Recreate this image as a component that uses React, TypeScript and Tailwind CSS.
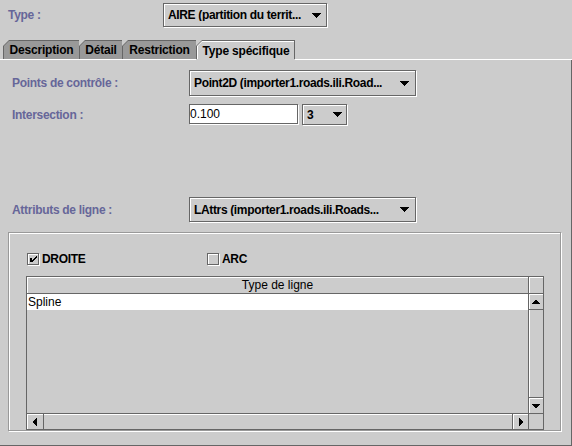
import React from "react";

function Arrow({ dir }: { dir: "down" | "up" | "left" | "right" | "combo" }) {
  if (dir === "combo")
    return (
      <svg width="9" height="5" viewBox="0 0 9 5" shapeRendering="crispEdges">
        <path d="M0 0h9v1H0zM1 1h7v1H1zM2 2h5v1H2zM3 3h3v1H3zM4 4h1v1H4z" fill="#000" />
      </svg>
    );
  if (dir === "up")
    return (
      <svg width="8" height="4" viewBox="0 0 8 4" shapeRendering="crispEdges">
        <path d="M3 0h2v1H3zM2 1h4v1H2zM1 2h6v1H1zM0 3h8v1H0z" fill="#000" />
      </svg>
    );
  if (dir === "down")
    return (
      <svg width="8" height="4" viewBox="0 0 8 4" shapeRendering="crispEdges">
        <path d="M0 0h8v1H0zM1 1h6v1H1zM2 2h4v1H2zM3 3h2v1H3z" fill="#000" />
      </svg>
    );
  if (dir === "left")
    return (
      <svg width="4" height="8" viewBox="0 0 4 8" shapeRendering="crispEdges">
        <path d="M0 3h1v2H0zM1 2h1v4H1zM2 1h1v6H2zM3 0h1v8H3z" fill="#000" />
      </svg>
    );
  return (
    <svg width="4" height="8" viewBox="0 0 4 8" shapeRendering="crispEdges">
      <path d="M0 0h1v8H0zM1 1h1v6H1zM2 2h1v4H2zM3 3h1v2H3z" fill="#000" />
    </svg>
  );
}

function Combo({ cls, arrowCls, text }: { cls: string; arrowCls: string; text: string }) {
  return (
    <div
      className={`flex items-center border border-[#666666] bg-[#cccccc] shadow-[inset_1px_1px_0_#ffffff,1px_1px_0_#ffffff] ${cls}`}
    >
      <div className="flex-1 pl-[4px] font-bold tracking-[-0.35px] whitespace-nowrap overflow-hidden">{text}</div>
      <div className={`h-full flex items-center justify-center ${arrowCls}`}>
        <Arrow dir="combo" />
      </div>
    </div>
  );
}

function Tab({ cls, label, selected, last }: { cls: string; label: string; selected?: boolean; last?: boolean }) {
  return (
    <div className={`flex flex-col ${cls}`}>
      <div
        className={`h-[19px] bg-[#666666] pt-px pl-px [clip-path:polygon(0_6px,6px_0,100%_0,100%_100%,0_100%)] ${
          last ? "pr-px" : ""
        }`}
      >
        {selected ? (
          <div className="h-full bg-white pt-px pl-px [clip-path:polygon(0_5px,5px_0,100%_0,100%_100%,0_100%)]">
            <div className="h-full bg-[#cccccc] flex items-center justify-center font-bold tracking-[-0.2px] [clip-path:polygon(0_4px,4px_0,100%_0,100%_100%,0_100%)]">
              {label}
            </div>
          </div>
        ) : (
          <div className="h-full bg-[#999999] flex items-center justify-center font-bold tracking-[-0.2px] [clip-path:polygon(0_5px,5px_0,100%_0,100%_100%,0_100%)]">
            {label}
          </div>
        )}
      </div>
      <div className={`h-px ${selected ? "bg-[#cccccc]" : "bg-white"}`} />
    </div>
  );
}

function Label({ children }: { children: React.ReactNode }) {
  return (
    <div className="w-[189px] pl-[12px] font-bold tracking-[-0.3px] text-[#666699] whitespace-nowrap">{children}</div>
  );
}

function Check({ checked }: { checked?: boolean }) {
  return (
    <div className="relative w-[12px] h-[12px] border border-[#666666] bg-[#cccccc] shadow-[inset_1px_1px_0_#ffffff,1px_1px_0_#ffffff]">
      {checked && (
        <svg
          className="absolute left-[-1px] top-[-1px]"
          width="13"
          height="13"
          viewBox="0 0 13 13"
          shapeRendering="crispEdges"
        >
          <path d="M3 5h2v4H3zM9 3h1v2H9zM8 4h1v2H8zM7 5h1v2H7zM6 6h1v2H6zM5 7h1v2H5z" fill="#000" />
        </svg>
      )}
    </div>
  );
}

function ArrowBtn({ dir, cls }: { dir: "up" | "down" | "left" | "right"; cls: string }) {
  return (
    <div
      className={`flex items-center justify-center bg-[#cccccc] shadow-[inset_1px_1px_0_#ffffff] border-[#666666] ${cls}`}
    >
      <Arrow dir={dir} />
    </div>
  );
}

export default function App() {
  return (
    <div className="w-[572px] h-[446px] bg-[#cccccc] font-['Liberation_Sans',Arial,sans-serif] text-[12px] leading-none text-black flex flex-col overflow-hidden">
      <div className="h-[40px] flex items-start pt-[3px]">
        <div className="w-[163px] h-[24px] pl-[8px] flex items-center font-bold tracking-[-0.3px] text-[#666699]">
          Type :
        </div>
        <Combo cls="w-[164px] h-[24px]" arrowCls="w-[20px]" text="AIRE (partition du territ..." />
      </div>

      <div className="h-[20px] flex">
        <div className="w-[3px] flex flex-col justify-end">
          <div className="h-px bg-white" />
        </div>
        <Tab cls="w-[76px]" label="Description" />
        <Tab cls="w-[43px]" label="Détail" />
        <Tab cls="w-[74px]" label="Restriction" />
        <Tab cls="w-[99px]" label="Type spécifique" selected last />
        <div className="flex-1 flex flex-col justify-end">
          <div className="h-px bg-white" />
        </div>
      </div>

      <div className="flex-1 border-r border-b border-[#666666] flex flex-col pt-[10px]">
        <div className="flex items-center h-[26px]">
          <Label>Points de contrôle :</Label>
          <Combo cls="w-[227px] h-[26px]" arrowCls="w-[22px]" text="Point2D (importer1.roads.ili.Road..." />
        </div>

        <div className="flex items-center h-[21px] mt-[8px]">
          <Label>Intersection :</Label>
          <div className="self-start w-[109px] h-[20px] bg-white border border-[#666666] shadow-[1px_1px_0_#ffffff] flex items-center">
            0.100
          </div>
          <Combo cls="w-[45px] h-[21px] ml-[4px]" arrowCls="w-[17px]" text="3" />
        </div>

        <div className="flex items-center h-[25px] mt-[72px]">
          <Label>Attributs de ligne :</Label>
          <Combo cls="w-[227px] h-[25px]" arrowCls="w-[22px]" text="LAttrs (importer1.roads.ili.Roads..." />
        </div>

        <div className="mt-[10px] ml-[8px] w-[553px] h-[199px] border border-[#999999] shadow-[inset_1px_1px_0_#ffffff,1px_1px_0_#ffffff] pt-[19px] pl-[17px] flex flex-col">
          <div className="flex items-center h-[13px] pl-[1px]">
            <div className="w-[180px] flex items-center gap-[3px]">
              <Check checked />
              <span className="font-bold tracking-[-0.3px]">DROITE</span>
            </div>
            <div className="flex items-center gap-[3px]">
              <Check />
              <span className="font-bold tracking-[-0.3px]">ARC</span>
            </div>
          </div>

          <div className="mt-[11px] w-[518px] h-[154px] border border-[#666666] flex flex-col">
            <div className="flex h-[136px]">
              <div className="w-[501px] flex flex-col">
                <div className="h-[17px] border-b border-[#666666] shadow-[inset_1px_1px_0_#ffffff] flex items-center justify-center">
                  Type de ligne
                </div>
                <div className="h-[16px] bg-white flex items-center pl-[1px]">Spline</div>
                <div className="flex-1" />
              </div>
              <div className="w-[15px] border-l border-[#666666] flex flex-col">
                <div className="h-[17px] border-b border-[#666666] shadow-[inset_1px_1px_0_#ffffff]" />
                <ArrowBtn dir="up" cls="h-[16px] border-b" />
                <div className="flex-1 shadow-[inset_1px_0_0_#ffffff]" />
                <ArrowBtn dir="down" cls="h-[16px] border-t" />
              </div>
            </div>
            <div className="flex h-[16px] border-t border-[#666666]">
              <ArrowBtn dir="left" cls="w-[17px] border-r" />
              <div className="flex-1 shadow-[inset_0_1px_0_#ffffff]" />
              <ArrowBtn dir="right" cls="w-[16px] border-l" />
              <div className="w-[15px] border-l border-[#666666]" />
            </div>
          </div>
        </div>
      </div>
    </div>
  );
}
